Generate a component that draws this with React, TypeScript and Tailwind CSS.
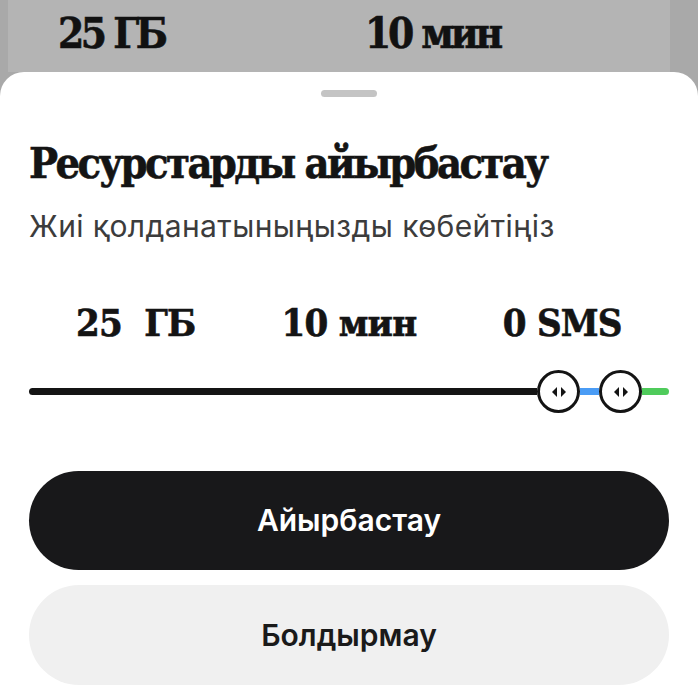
import React from "react";

const slab =
  "font-['DejaVu_Serif_Condensed','DejaVu_Serif',serif] font-bold [-webkit-text-stroke:0.6px_#141414]";
const sans = "font-['Inter','Roboto',sans-serif]";

// Handle of the range slider: white circle with two small arrows
const Thumb: React.FC = () => (
  <div className="w-[43px] h-[43px] shrink-0 rounded-full border-[3px] border-[#141414] bg-white flex items-center justify-center">
    <svg width="16" height="12" viewBox="0 0 16 12">
      <polygon points="6,1 6,11 1,6" fill="#141414" />
      <polygon points="10,1 10,11 15,6" fill="#141414" />
    </svg>
  </div>
);

const App: React.FC = () => {
  const values = ["25\u00a0\u00a0ГБ", "10 мин", "0 SMS"];

  return (
    <div className="w-[698px] h-[700px] overflow-hidden bg-[#a9a9a9] flex flex-col">
      {/* dimmed page behind the sheet */}
      <div className="h-[72px] shrink-0 ml-[8px] mr-[28px] bg-[#b4b4b4] flex items-start pt-[9px]">
        <div className={`${slab} text-[42px] leading-[50px] text-[#111] pl-[50px] w-[357px] tracking-[-3.5px]`}>
          25 ГБ
        </div>
        <div className={`${slab} text-[42px] leading-[50px] text-[#111] tracking-[-3.2px]`}>10 мин</div>
      </div>

      {/* bottom sheet */}
      <div className="flex-1 bg-white rounded-t-[24px] flex flex-col px-[29px]">
        <div className="flex justify-center pt-[18px]">
          <div className="w-[56px] h-[7px] rounded-full bg-[#c4c4c4]" />
        </div>

        <h1 className={`${slab} text-[43px] leading-[50px] text-[#141414] mt-[41px] tracking-[-2.6px]`}>
          Ресурстарды айырбастау
        </h1>
        <p className={`${sans} text-[30px] leading-[36px] text-[#3c3c3c] mt-[20px] tracking-[0.4px]`}>
          Жиі қолданатыныңызды көбейтіңіз
        </p>

        <div className="grid grid-cols-3 mt-[56px]">
          {values.map((v) => (
            <div key={v} className={`${slab} text-[38px] leading-[46px] text-[#141414] text-center tracking-[-0.8px]`}>
              {v}
            </div>
          ))}
        </div>

        <div className="flex items-center mt-[24px]">
          <div className="h-[7px] flex-1 rounded-l-full bg-[#141414]" />
          <Thumb />
          <div className="h-[7px] w-[19px] bg-[#4a9cf5]" />
          <Thumb />
          <div className="h-[7px] w-[27px] rounded-r-full bg-[#4fcb5b]" />
        </div>

        <button className={`${sans} mt-[58px] h-[99px] rounded-full bg-[#18181a] text-white text-[30px] font-semibold`}>
          Айырбастау
        </button>
        <button className={`${sans} mt-[15px] h-[100px] rounded-full bg-[#f0f0f0] text-[#1a1a1a] text-[30px] font-semibold`}>
          Болдырмау
        </button>
      </div>
    </div>
  );
};

export default App;
